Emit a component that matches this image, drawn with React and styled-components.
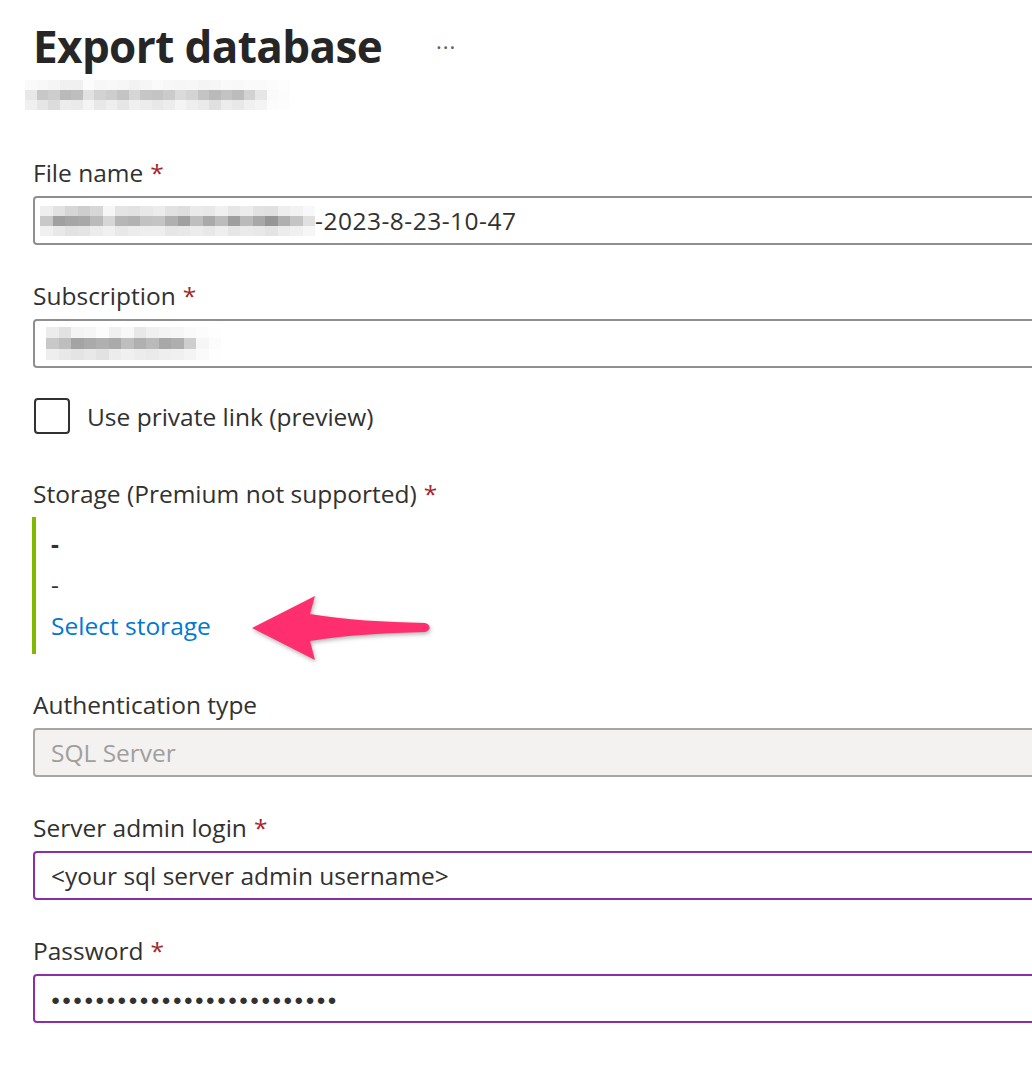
import React from "react";
import styled, { createGlobalStyle } from "styled-components";

const GlobalStyle = createGlobalStyle`
  html, body {
    margin: 0;
    background: #ffffff;
  }
  body {
    font-family: "Open Sans", "Noto Sans", sans-serif;
    color: #323130;
  }
`;

// pixel shades for the blurred (redacted) bits
const subtitleShades = [
  [250, 248, 245, 240, 240, 252, 247, 248, 246, 242, 246, 250, 247, 246, 247, 244, 246, 249, 248, 250, 250, 252, 253],
  [232, 200, 205, 186, 190, 225, 210, 205, 196, 214, 198, 196, 203, 218, 212, 196, 186, 195, 188, 210, 230, 250, 252],
  [240, 230, 220, 236, 234, 244, 232, 238, 230, 240, 236, 232, 236, 244, 238, 234, 224, 236, 232, 240, 244, 252, 253],
];
const fileShades = [
  [238, 226, 214, 206, 215, 246, 228, 226, 232, 236, 226, 222, 234, 232, 240, 230, 236, 226, 224, 238, 242, 248],
  [200, 160, 166, 168, 186, 214, 182, 178, 194, 196, 176, 160, 190, 170, 188, 158, 186, 168, 150, 176, 196, 224],
  [240, 232, 226, 228, 236, 240, 232, 236, 238, 238, 230, 232, 236, 232, 238, 230, 234, 232, 228, 236, 240, 246],
];
const subShades = [
  [236, 226, 244, 246, 252, 240, 248, 232, 240, 244, 246, 250, 252, 254],
  [200, 190, 164, 170, 176, 170, 190, 176, 186, 168, 174, 206, 246, 252],
  [238, 232, 228, 232, 226, 236, 240, 236, 234, 238, 240, 244, 250, 254],
];

const Page = styled.div`
  position: relative;
  width: 1032px;
  min-height: 1072px;
  overflow: hidden;
  padding: 14px 0 0 33px;
  box-sizing: border-box;
`;

const TitleRow = styled.div`
  display: flex;
  align-items: center;
  gap: 54px;
`;

const Title = styled.h1`
  margin: 0;
  font-family: "Open Sans", sans-serif;
  font-size: 44px;
  font-weight: 700;
  line-height: 64px;
  color: #262626;
  letter-spacing: -0.6px;
`;

const More = styled.span`
  font-size: 22px;
  color: #605e5c;
  letter-spacing: 1px;
  margin-top: 0;
`;

const PixelBlock = styled.div`
  display: flex;
  flex-direction: column;
  margin-left: ${(p) => p.$left || 0}px;
  margin-top: ${(p) => p.$top || 0}px;
`;

const PixelRow = styled.div`
  display: flex;
`;

const Pixel = styled.span`
  display: block;
  width: ${(p) => p.$w}px;
  height: ${(p) => p.$h}px;
  background: ${(p) => `rgb(${p.$g}, ${p.$g}, ${p.$g})`};
`;

const Pixels = ({ shades, w, h, left, top }) => (
  <PixelBlock $left={left} $top={top}>
    {shades.map((row, i) => (
      <PixelRow key={i}>
        {row.map((g, j) => (
          <Pixel key={j} $w={w} $h={h} $g={g} />
        ))}
      </PixelRow>
    ))}
  </PixelBlock>
);

const Form = styled.div`
  display: flex;
  flex-direction: column;
  margin-top: 48px;
`;

const Field = styled.div`
  display: flex;
  flex-direction: column;
  margin-bottom: ${(p) => (p.$last ? 0 : 36)}px;
`;

const Label = styled.label`
  font-size: 24.5px;
  line-height: 30px;
  color: #323130;
  margin-bottom: 8px;
`;

const Star = styled.span`
  color: #a4262c;
  margin-left: 7px;
`;

const Input = styled.div`
  display: flex;
  align-items: center;
  width: 1040px;
  height: 49px;
  box-sizing: border-box;
  padding-left: 16px;
  border: 2px solid ${(p) => (p.$focus ? "#8c2fa5" : p.$disabled ? "#a8a6a4" : "#8f8f8f")};
  border-radius: 4px;
  background: ${(p) => (p.$disabled ? "#f3f2f1" : "#ffffff")};
  color: ${(p) => (p.$disabled ? "#a19f9d" : "#323130")};
  font-size: 24.5px;
`;

const Stamp = styled.span`
  letter-spacing: 0.5px;
`;

const Dots = styled.span`
  font-size: 15px;
  letter-spacing: 2px;
  color: #323130;
`;

const CheckRow = styled.label`
  display: flex;
  align-items: center;
  gap: 17px;
  margin: -6px 0 45px 1px;
  font-size: 24.5px;
  color: #323130;
`;

const Box = styled.span`
  width: 36px;
  height: 36px;
  box-sizing: border-box;
  border: 2px solid #323130;
  border-radius: 4px;
`;

const StoragePanel = styled.div`
  display: flex;
  flex-direction: column;
  border-left: 4px solid #7fba00;
  margin-left: -1px;
  padding: 6px 0 8px 15px;
  height: 137px;
  box-sizing: border-box;
`;

const StorageLine = styled.div`
  font-size: 24.5px;
  line-height: 41px;
  font-weight: ${(p) => (p.$bold ? 700 : 400)};
  color: ${(p) => (p.$link ? "#0078d4" : "#323130")};
  cursor: ${(p) => (p.$link ? "pointer" : "default")};
`;

const Arrow = styled.svg`
  position: absolute;
  left: 245px;
  top: 589px;
  overflow: visible;
  filter: drop-shadow(1px 2px 2px rgba(0, 0, 0, 0.3));
`;

export default function App() {
  return (
    <>
      <GlobalStyle />
      <Page>
        <TitleRow>
          <Title>Export database</Title>
          <More>···</More>
        </TitleRow>
        <Pixels shades={subtitleShades} w={11.5} h={10} left={-8} top={2} />

        <Form>
          <Field>
            <Label>
              File name<Star>*</Star>
            </Label>
            <Input>
              <Pixels shades={fileShades} w={12.5} h={10} left={-11} />
              <Stamp>-2023-8-23-10-47</Stamp>
            </Input>
          </Field>

          <Field>
            <Label>
              Subscription<Star>*</Star>
            </Label>
            <Input>
              <Pixels shades={subShades} w={12.5} h={11} left={-5} />
            </Input>
          </Field>

          <CheckRow>
            <Box />
            Use private link (preview)
          </CheckRow>

          <Field>
            <Label>
              Storage (Premium not supported)<Star>*</Star>
            </Label>
            <StoragePanel>
              <StorageLine $bold>-</StorageLine>
              <StorageLine>-</StorageLine>
              <StorageLine $link>Select storage</StorageLine>
            </StoragePanel>
          </Field>

          <Field>
            <Label>Authentication type</Label>
            <Input $disabled>SQL Server</Input>
          </Field>

          <Field>
            <Label>
              Server admin login<Star>*</Star>
            </Label>
            <Input $focus>&lt;your sql server admin username&gt;</Input>
          </Field>

          <Field $last>
            <Label>
              Password<Star>*</Star>
            </Label>
            <Input $focus>
              <Dots>{"●".repeat(26)}</Dots>
            </Input>
          </Field>
        </Form>

        <Arrow width="190" height="80" viewBox="0 0 190 80">
          <path
            d="M7 39 L70 7 L65 25 C100 31 140 33 180 34 C186 35 186 42 180 43 C140 44 100 46 65 52 L70 71 Z"
            fill="#ff2e6e"
          />
        </Arrow>
      </Page>
    </>
  );
}
